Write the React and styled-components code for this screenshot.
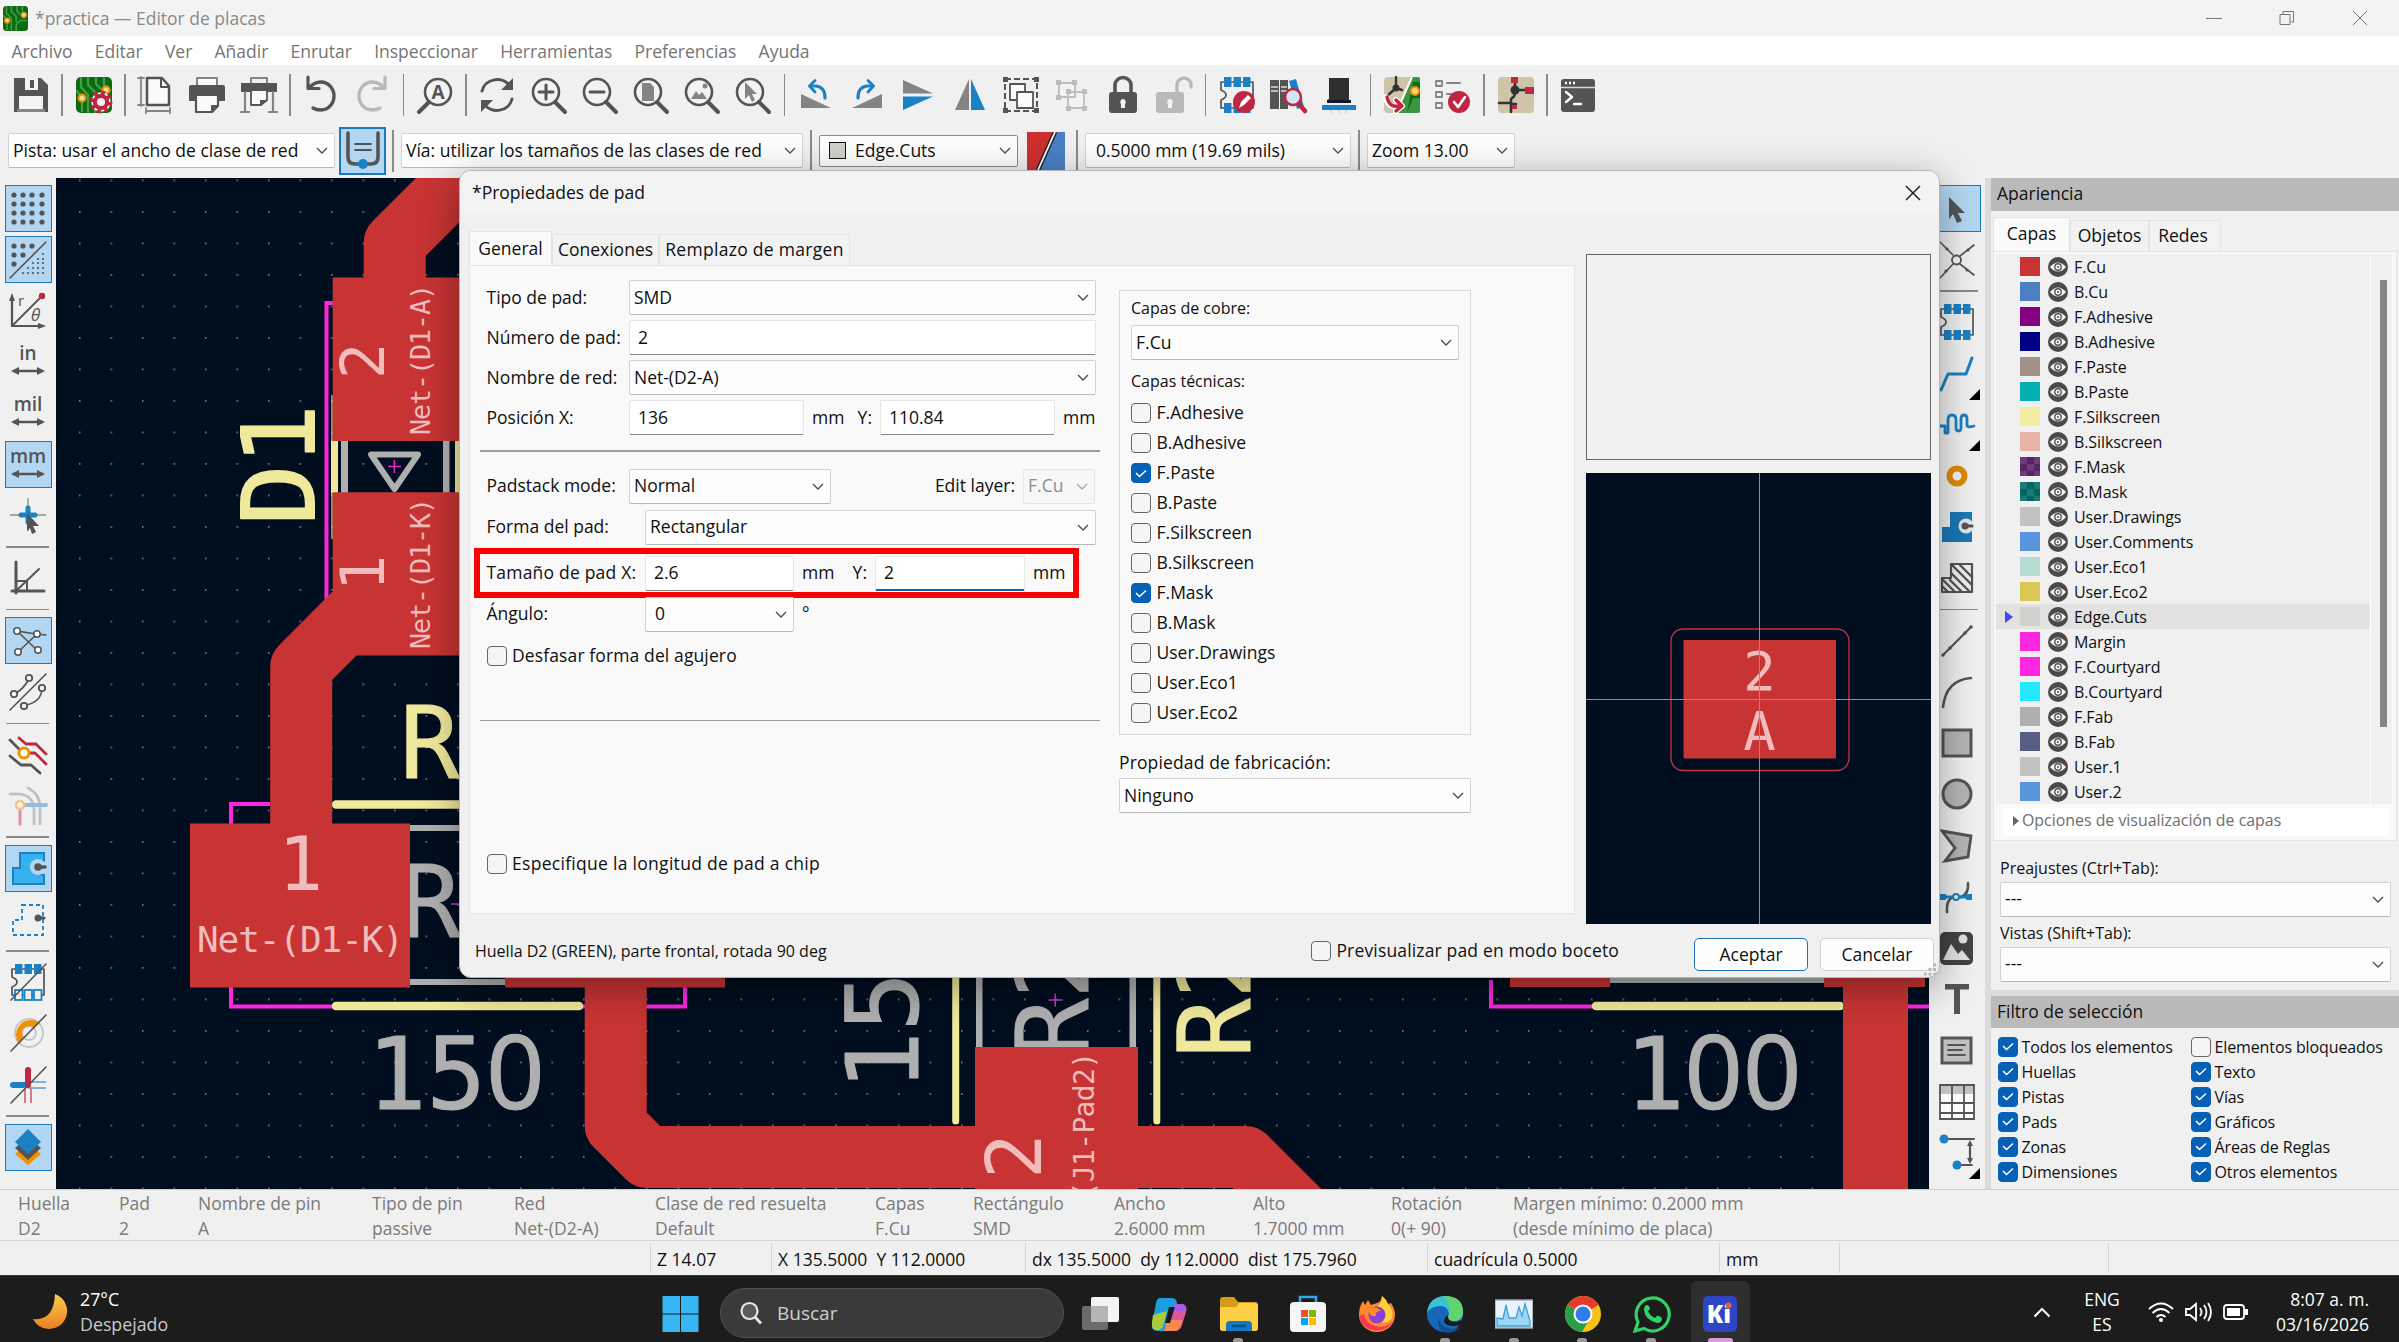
import styled, { createGlobalStyle, css } from "styled-components";

const GlobalStyle = createGlobalStyle`
  * {
    box-sizing: border-box;
  }

  body {
    margin: 0;
    overflow: hidden;
    background: #f0f0f0;
    color: #101010;
    font-family: "Open Sans", "Noto Sans", sans-serif;
    font-size: 17.5px;
    line-height: 1;
  }
`;

const G = "#545454";
const L = "#848484";
const B = "#1a81c4";
const R = "#bf2641";
const O = "#f29100";
const CU = "#c83434";

// --- 아이콘 (36x36) ---

const stroke = (color, width = 2.5) => ({
  fill: "none",
  stroke: color,
  strokeWidth: width,
  strokeLinecap: "round",
  strokeLinejoin: "round",
});

const Lens = ({ children }) => (
  <>
    <circle cx="15" cy="15" r="13" {...stroke(G, 2.6)} fill="#f3f3f3" />
    <path d="M24 25l10 10" {...stroke(G, 4)} />
    {children}
  </>
);

const Board = () => (
  <>
    <rect x="0" y="0" width="36" height="36" rx="5" fill="#0c6b12" />
    <path
      d="M5 1v9l7 8v17M12 1v7l7 7v8M20 1v6l5 5M1 14l5 7v13M28 1v7l6 5M19 35v-8l6-6h9"
      {...stroke("#3fa046", 2.2)}
    />
    <circle cx="30" cy="13" r="3.5" fill="#f2d9a0" stroke={O} strokeWidth="2" />
    <circle cx="6" cy="21" r="3.5" fill="#f2d9a0" stroke={O} strokeWidth="2" />
  </>
);

const Dots = ({ pts, r = 2.6 }) =>
  pts.map(([x, y]) => <circle key={`${x}-${y}`} cx={x} cy={y} r={r} fill={G} />);

const gridPts = [4, 13, 22, 32].flatMap((x) => [4, 13, 22, 31].map((y) => [x, y]));
const finePts = [
  [33, 12], [28, 17], [33, 17], [23, 21], [28, 21], [33, 21], [18, 26], [23, 26],
  [28, 26], [33, 26], [13, 31], [18, 31], [23, 31], [28, 31], [33, 31],
];

const Arrows = ({ label }) => (
  <>
    <text
      x="18"
      y="16"
      textAnchor="middle"
      fontFamily="Open Sans"
      fontWeight="600"
      fontSize="19"
      fill={G}
    >
      {label}
    </text>
    <path d="M4 27h28" {...stroke(G, 2.5)} />
    <path d="M1 27l8-4v8zM35 27l-8-4v8z" fill={G} />
  </>
);

const ChipPads = ({ hollow }) => (
  <>
    <path d="M2 5h32v26H2v-8q5-2 5-5t-5-5z" {...stroke(G, 1.7)} />
    {[5, 14.5, 24].map((x) => (
      <g key={x}>
        <rect x={x} y="0" width="7.5" height="10" fill={B} />
        <rect
          x={x}
          y="26"
          width="7.5"
          height="10"
          fill={hollow ? "#f0f0f0" : B}
          stroke={B}
          strokeWidth={hollow ? 1.8 : 0}
        />
      </g>
    ))}
  </>
);

const Picture = () => <path d="M7 22l5-8 3 4 3-3 5 7z" fill={L} />;

const icons = {
  save: (
    <>
      <path d="M1 1h27l7 7v27H1z" fill={G} />
      <rect x="12" y="1" width="13" height="12" fill="#f3f3f3" />
      <rect x="17" y="3" width="4" height="8" fill={G} />
      <rect x="6" y="19" width="24" height="13" fill="#f3f3f3" />
      <rect x="4" y="32" width="28" height="3" fill={L} />
    </>
  ),
  boardSetup: (
    <>
      <Board />
      <circle cx="25" cy="25" r="9" fill={R} stroke="#fff" strokeWidth="1.5" />
      <circle cx="25" cy="25" r="9.5" fill="none" stroke={R} strokeWidth="4" strokeDasharray="4 3.4" />
      <circle cx="25" cy="25" r="4" fill="#f3f3f3" />
    </>
  ),
  page: (
    <>
      <path d="M9 1h15l7 8v19H9z" {...stroke(G, 2.5)} fill="#fafafa" />
      <path d="M23 1v9h8" {...stroke(G, 2)} />
      <path d="M3 0v29M0 1h6M0 28h6M8 34h24M8 31v5M32 31v5" {...stroke(L, 1.8)} />
    </>
  ),
  print: (
    <>
      <path d="M8 8V1h20v7" {...stroke(L, 2)} fill="#fafafa" />
      <path d="M0 10q0-2 2-2h32q2 0 2 2v14h-7v-6H7v6H0z" fill={G} />
      <path d="M7 18h22v11l-6 6H7z" {...stroke(G, 2.2)} fill="#fafafa" />
      <path d="M22 35v-7h7" fill={G} />
    </>
  ),
  plot: (
    <>
      <path d="M10 6V1h16v5" {...stroke(L, 2)} />
      <path d="M0 6h36v9H0z" fill={G} />
      <path d="M4 15v20M32 15v20M0 35h8M28 35h8" {...stroke(L, 2.2)} />
      <path d="M10 13h16v10l-6 5H10z" {...stroke(G, 1.8)} fill="#fafafa" />
      <path d="M19 29v-6h7z" fill={G} />
    </>
  ),
  undo: (
    <>
      <path d="M6 11Q11 5 18 5a13 14 0 0 1 0 28q-5 0-8-2" {...stroke(G, 3.4)} />
      <path d="M5 0v11.500h11" {...stroke(G, 3.2)} />
    </>
  ),
  redo: (
    <>
      <path d="M30 11Q25 5 18 5a13 14 0 0 0 0 28q5 0 8-2" {...stroke("#b9b9b9", 3.4)} />
      <path d="M31 0v11.500H20" {...stroke("#b9b9b9", 3.2)} />
    </>
  ),
  find: (
    <>
      <circle cx="21" cy="15" r="13" {...stroke(G, 2.6)} fill="#f3f3f3" />
      <path d="M12 25L2 35" {...stroke(G, 4)} />
      <text x="21" y="22" textAnchor="middle" fontFamily="Open Sans" fontWeight="700" fontSize="19" fill={G}>
        A
      </text>
    </>
  ),
  refresh: (
    <>
      <path d="M3 14A15.500 14.500 0 0 1 31 9M33 22A15.500 14.500 0 0 1 5 27" {...stroke(G, 3)} />
      <path d="M34 1v12H22zM2 35V23h12z" fill={G} />
    </>
  ),
  zoomIn: (
    <Lens>
      <path d="M15 8v14M8 15h14" {...stroke(G, 3)} />
    </Lens>
  ),
  zoomOut: (
    <Lens>
      <path d="M8 15h14" {...stroke(G, 3)} />
    </Lens>
  ),
  zoomFit: (
    <Lens>
      <path d="M9 6h8l4 4v14H9z" fill={L} />
    </Lens>
  ),
  zoomObj: (
    <Lens>
      <Picture />
      <circle cx="21" cy="9" r="2.500" fill={L} />
    </Lens>
  ),
  zoomSel: (
    <Lens>
      <path d="M10 5l12 12h-5l3 6-3 2-3-7-4 4z" fill={L} />
    </Lens>
  ),
  rotL: (
    <>
      <path d="M3 17v14h30z" fill={L} />
      <path d="M12 9h6q9 1 9 12" {...stroke(B, 3.2)} />
      <path d="M17 3.500L11.500 9l5.500 6" {...stroke(B, 2.8)} />
    </>
  ),
  rotR: (
    <>
      <path d="M33 17v14H3z" fill={L} />
      <path d="M24 9h-6q-9 1-9 12" {...stroke(B, 3.2)} />
      <path d="M19 3.500L24.500 9 19 15" {...stroke(B, 2.8)} />
    </>
  ),
  flipV: (
    <>
      <path d="M3 3l30 13.500H3z" fill={L} />
      <path d="M3 33l30-13.500H3z" fill={B} />
    </>
  ),
  flipH: (
    <>
      <path d="M17 2v31H3z" fill={L} />
      <path d="M19 2v31h14z" fill={B} />
    </>
  ),
  group: (
    <>
      <rect x="2" y="2" width="32" height="32" fill="none" stroke={G} strokeWidth="2" strokeDasharray="6 3" />
      <path d="M7 7h15v16H7z" {...stroke(G, 1.8)} fill="#fafafa" />
      <path d="M14 15h16v16H14z" {...stroke(G, 1.8)} fill="#fafafa" />
      <path d="M0 0h5v5H0zM31 0h5v5h-5zM0 31h5v5H0zM31 31h5v5h-5z" fill={G} />
    </>
  ),
  ungroup: (
    <>
      <path d="M5 6h16v14H5zM14 15h16v16H14z" {...stroke("#bdbdbd", 1.8)} fill="#f3f3f3" />
      <path
        d="M2 3h5v5H2zM18 3h5v5h-5zM2 18h5v5H2zM12 12h5v5h-5zM28 12h5v5h-5zM12 29h5v5h-5zM28 29h5v5h-5z"
        fill="#bdbdbd"
      />
    </>
  ),
  lock: (
    <>
      <path d="M10 16V8a8 7.500 0 0 1 16 0v8" {...stroke(G, 3.6)} />
      <rect x="4" y="15" width="28" height="21" rx="3" fill={G} />
      <path d="M18 22a3 3 0 0 1 2 5v4h-4v-4a3 3 0 0 1 2-5" fill="#f3f3f3" />
    </>
  ),
  unlock: (
    <>
      <path d="M21 16V8a7 7 0 0 1 14 0v2" {...stroke("#b9b9b9", 3.4)} />
      <rect x="0" y="15" width="28" height="21" rx="3" fill="#b9b9b9" />
      <path d="M14 22a3 3 0 0 1 2 5v4h-4v-4a3 3 0 0 1 2-5" fill="#f3f3f3" />
    </>
  ),
  fpEdit: (
    <>
      <ChipPads />
      <circle cx="25" cy="25" r="11" fill={R} />
      <path d="M20 31l2-6 7-7 3 3-7 7z" fill="#fff" />
    </>
  ),
  library: (
    <>
      <rect x="0" y="3" width="9" height="29" fill={G} />
      <rect x="10" y="3" width="8" height="29" fill={G} />
      <path d="M1 10h7M1 14h7M11 10h6M11 14h6" stroke="#ddd" strokeWidth="1.500" />
      <path d="M19 4l7-2 8 28-7 2z" fill={B} />
      <circle cx="23" cy="20" r="8" fill="#cfe6f7" stroke={R} strokeWidth="2.500" />
      <path d="M29 27l6 7" {...stroke(R, 4.5)} />
    </>
  ),
  chip3d: (
    <>
      <path d="M8 1h20v25H6V23l2-1z" fill="#2f2f2f" />
      <rect x="6" y="23" width="24" height="3" fill="#11182a" />
      <rect x="1" y="28" width="34" height="5" fill={B} />
      <path d="M10 33v3M18 33v3M25 33v3" stroke="#9fc8e6" />
    </>
  ),
  updatePcb: (
    <>
      <rect width="36" height="36" rx="4" fill="#cfc4a8" />
      <path d="M36 2v32q0 2-2 2H14L27 0h7q2 0 2 2" fill="#3e9445" />
      <path d="M29 5h7v16h-7l-6 15" fill="#0f6b14" />
      <path d="M12 0v11l6 2M12 11l-9 8" {...stroke("#333", 2.4)} />
      <circle cx="12" cy="11" r="3.500" fill="#333" />
      <circle cx="31" cy="14" r="4" fill="#f5d18c" stroke={O} strokeWidth="2" />
      <path d="M28 0L12 36" stroke="#fff" strokeWidth="2" />
      <path d="M2 20q2 12 14 9M12 23l6 6-6 5" {...stroke("#fff", 6)} />
      <path d="M3 20q2 11 13 9M12 23l6 6-6 5" {...stroke(R, 3.4)} />
    </>
  ),
  drc: (
    <>
      <path d="M1 4h6v5H1zM1 15h6v5H1zM1 26h6v5H1z" {...stroke(L, 1.8)} />
      <path d="M12 6h13M12 17h6" {...stroke(L, 2)} />
      <circle cx="24" cy="25" r="11" fill={R} />
      <path d="M19 25l4 5 7-10" {...stroke("#fff", 2.6)} />
    </>
  ),
  schematic: (
    <>
      <rect width="36" height="36" rx="4" fill="#cfc4a8" />
      <path d="M17 6v7h12M17 13q1 6-4 9v13M13 26H1M13 27h5" {...stroke("#333", 2.6)} />
      <circle cx="17" cy="13" r="4.500" fill="#333" />
      <path d="M13 0h7v6h-7zM27 10h9v7h-9zM14 28h5v4h-5z" fill={R} />
    </>
  ),
  terminal: (
    <>
      <rect x="1" y="2" width="34" height="33" rx="3" fill={G} />
      <path d="M1 10.500h34" stroke="#d8d8d8" strokeWidth="1.600" />
      <path d="M5 6h2M9 6h2M13 6h2" stroke="#fff" strokeWidth="2.600" />
      <path d="M6 15l6 5-6 5M14 27h7" {...stroke("#fff", 2.4)} />
    </>
  ),
  trackAuto: (
    <>
      <path d="M3 0v24q0 7 7 7h16q7 0 7-7V0" {...stroke(G, 3.6)} />
      <path d="M10 11h16M10 17h16" {...stroke(G, 1.8)} />
      <circle cx="18" cy="31" r="5" fill={B} />
    </>
  ),
  grid: <Dots pts={gridPts} />,
  gridOverride: (
    <>
      <Dots pts={[[4, 4], [13, 4], [22, 4], [4, 13], [13, 13], [4, 22]]} />
      <Dots pts={finePts} r={1.1} />
      <path d="M0 36L36 0" {...stroke(G, 1.6)} />
    </>
  ),
  polar: (
    <>
      <path d="M2 4v29h28" {...stroke(G, 2.2)} />
      <path d="M2 0l3 8h-6zM36 33l-8-3v6z" fill={G} />
      <path d="M2 33L31 4" {...stroke(G, 1.8)} />
      <circle cx="32" cy="3" r="3.200" fill={R} />
      <text x="8" y="13" fontSize="15" fill={G} fontFamily="Open Sans">r</text>
      <text x="21" y="28" fontSize="17" fontStyle="italic" fill={G} fontFamily="Open Sans">θ</text>
    </>
  ),
  inch: <Arrows label="in" />,
  mil: <Arrows label="mil" />,
  mm: <Arrows label="mm" />,
  cursor: (
    <>
      <path d="M18 0v33M0 17h36" stroke="#a5a5a5" strokeWidth="1.800" />
      <path d="M18 10v14M11 17h14" {...stroke(B, 5)} />
      <path d="M17 15l12 13h-6l3 6-4 2-2-6-3 3z" fill={G} />
    </>
  ),
  angle: (
    <>
      <path d="M6 2v31M2 31h32" {...stroke(G, 3)} />
      <path d="M6 31L29 9M6 21h11v10" {...stroke(G, 2)} />
    </>
  ),
  rats: (
    <>
      <path d="M7 8l21 20M8 29L27 11M7 8q18 3 29 4" {...stroke(G, 1.6)} />
      {[[7, 8], [27, 11], [8, 29], [28, 27]].map(([x, y]) => (
        <circle key={`${x}${y}`} cx={x} cy={y} r="3.200" fill="#fff" stroke={G} strokeWidth="1.500" />
      ))}
    </>
  ),
  ratsCurved: (
    <>
      <path d="M0 36L36 0M4 20q9-4 15-15M32 15q-1 13-16 16" {...stroke(G, 1.6)} />
      {[[4, 20], [19, 4], [32, 14], [14, 32]].map(([x, y]) => (
        <circle key={`${x}${y}`} cx={x} cy={y} r="3.200" fill="#f5f5f5" stroke={G} strokeWidth="1.800" />
      ))}
    </>
  ),
  netColor: (
    <>
      <path d="M0 3l14 14M0 19l11 9h10l9 8" {...stroke(G, 2.8)} />
      <path d="M9 1l7 6h10l10 10M15 16h10l11 11" {...stroke(R, 2.8)} />
      <circle cx="14" cy="16" r="5" fill="#fff" stroke={O} strokeWidth="3" />
    </>
  ),
  netDim: (
    <g opacity="0.450">
      <path d="M0 6h10q14 2 14 16v14M18 0q12 6 12 20v16" {...stroke(L, 2.6)} />
      <path d="M14 17h22" {...stroke(B, 4)} />
      <path d="M10 22v14" {...stroke(R, 3)} />
      <circle cx="10" cy="17" r="4" fill="#fff" stroke={O} strokeWidth="2.600" />
    </g>
  ),
  zoneFill: (
    <>
      <path d="M10 3h24v8a7 7 0 0 0 0 14v9H3V18h7z" fill="#37b2ef" stroke={B} strokeWidth="2" />
      <circle cx="28" cy="17" r="8" fill="#b3d7f2" />
      <circle cx="28" cy="17" r="3.800" fill={G} />
      <path d="M28 17h7" {...stroke(G, 3.6)} />
    </>
  ),
  zoneOutline: (
    <>
      <path d="M12 3h21v30H3V18h9z" fill="none" stroke={B} strokeWidth="1.800" strokeDasharray="4 3" />
      <circle cx="28" cy="16" r="3.500" fill={G} />
      <path d="M28 16h6" {...stroke(G, 3.2)} />
    </>
  ),
  padSketch: (
    <>
      <ChipPads hollow />
      <path d="M1 36L36 0" {...stroke(G, 1.6)} />
    </>
  ),
  viaSketch: (
    <>
      <circle cx="19" cy="18" r="14" {...stroke("#c4c4c4", 1.8)} />
      <circle cx="19" cy="18" r="7" {...stroke("#c4c4c4", 1.8)} />
      <path d="M9 29A15 15 0 0 1 30 8l-6 5a7 7 0 0 0-10 10z" fill={O} />
      <path d="M1 36L36 0" {...stroke(G, 1.6)} />
    </>
  ),
  trackSketch: (
    <>
      <path d="M3 18h14" {...stroke(B, 6)} />
      <path d="M18 15h18M18 21h18" stroke="#7fb0d6" strokeWidth="2.200" />
      <path d="M18 3v15" {...stroke(R, 6)} />
      <path d="M15 20v16M21 20v16" stroke="#d6798a" strokeWidth="2" />
      <path d="M1 36L36 0" {...stroke(G, 1.6)} />
    </>
  ),
  layers: (
    <>
      <path d="M18 14l13 11-13 11L5 25z" fill={O} />
      <path d="M18 8l13 11-13 12L5 19z" fill={G} />
      <path d="M18 0l13 13-13 12L5 13z" fill={B} />
    </>
  ),
  select: <path d="M10 6l16 16h-7l4 8-5 2-4-9-4 5z" fill={G} />,
  localRats: (
    <>
      <path d="M1 0l13 13M35 3L21 14M1 36l13-14M35 33L21 22" {...stroke(G, 1.6)} />
      <circle cx="17.500" cy="18" r="4.500" {...stroke(G, 1.8)} />
      <Dots pts={[[29, 8], [8, 7], [7, 29], [28, 28]]} r={1.6} />
    </>
  ),
  footprint: <ChipPads />,
  route: <path d="M2 34l7-16h18l6-16" {...stroke(B, 3)} />,
  tune: (
    <path d="M0 19h6v7h3V13q0-5 4-5t4 5v8q0 3 2.500 3t2.500-3v-9q0-4 3-4t3 4v6q0 3 7 1" {...stroke(B, 2.8)} />
  ),
  via: <circle cx="18" cy="18" r="7.500" fill="#f3f3f3" stroke="#df8a08" strokeWidth="6" />,
  zone: (
    <>
      <path d="M11 3h22v30H3V18h8z" fill="#1a78b8" />
      <circle cx="27" cy="17" r="7.500" fill="#e6e6e6" />
      <circle cx="26" cy="17" r="3.500" fill={G} />
      <path d="M26 17h7" {...stroke(G, 3.2)} />
    </>
  ),
  ruleArea: (
    <>
      <path d="M12 4h21v28H3V18h9z" {...stroke(G, 2.2)} />
      <path d="M13 5l20 20M21 5l12 12M12 13l19 19M4 20l12 12M11 20l12 12M4 27l5 5" {...stroke(G, 2.4)} />
    </>
  ),
  line: (
    <>
      <path d="M4 32L32 4" {...stroke(G, 2.2)} />
      <Dots pts={[[4, 32], [11, 25], [32, 4], [26, 10]]} r={1.8} />
    </>
  ),
  arc: <path d="M4 33Q7 6 32 4" {...stroke(G, 2.6)} />,
  rect: <rect x="4" y="5" width="28" height="26" fill="#b5b5b5" stroke={G} strokeWidth="3" />,
  circle: <circle cx="18" cy="18" r="14" fill="#b5b5b5" stroke={G} strokeWidth="3" />,
  polygon: <path d="M3 3l29 5-3 21-23 4 10-13z" fill="#b5b5b5" stroke={G} strokeWidth="2.800" />,
  bezier: (
    <>
      <path d="M8 33q-1-12 6-15h8q8-3 7-14" {...stroke(G, 2.6)} />
      <path d="M3 18h28" stroke={B} strokeWidth="3" />
      <path d="M1 15h6v6H1zM27 15h6v6h-6z" fill={B} />
      <circle cx="17" cy="18" r="3" fill="#e8e8e8" stroke={B} strokeWidth="1.800" />
    </>
  ),
  image: (
    <>
      <rect x="1" y="2" width="33" height="33" rx="5" fill="#444" />
      <circle cx="24" cy="9" r="4.500" fill="#e2e2e2" />
      <path d="M4 30l8-16 7 10 4-4 8 10z" fill="#e2e2e2" />
    </>
  ),
  text: <path d="M6 3h24v5.500h-9V33h-6V8.500H6z" fill={G} />,
  textbox: (
    <>
      <rect x="3" y="6" width="29" height="25" fill="#bfbfbf" stroke={G} strokeWidth="3" />
      <path d="M9 13h17M9 18h14M9 23h17" {...stroke(G, 1.8)} />
    </>
  ),
  table: (
    <>
      <rect x="1" y="1" width="34" height="34" fill="#fbfbfb" />
      <path d="M1 1h34v9H1z" fill="#c2c2c2" />
      <path d="M1 1h34v34H1zM1 19h34M1 29h34M13 1v34M25 1v34" stroke={G} strokeWidth="1.800" fill="none" />
    </>
  ),
  dimension: (
    <>
      <path d="M5 4h30M18 30h15" {...stroke(G, 1.8)} />
      <path d="M31 8v18" {...stroke(G, 2.2)} />
      <path d="M31 5l3 6h-6zM31 29l3-6h-6z" fill={G} />
      <circle cx="5" cy="4" r="4.500" fill={B} />
      <circle cx="18" cy="30" r="4.500" fill={B} />
    </>
  ),
};

const Icon = ({ name, size = 36 }) => (
  <svg width={size} height={size} viewBox="0 0 36 36" overflow="visible">
    {icons[name]}
  </svg>
);

const Chevron = () => (
  <ChevronSvg viewBox="0 0 12 7">
    <path d="M1 1l5 5 5-5" fill="none" stroke="currentColor" strokeWidth="1.300" />
  </ChevronSvg>
);

// --- 데이터 ---

const menu = [
  "Archivo", "Editar", "Ver", "Añadir", "Enrutar", "Inspeccionar",
  "Herramientas", "Preferencias", "Ayuda",
];

const mainTools = [
  "save", "|", "boardSetup", "|", "page", "print", "plot", "|", "undo", "redo", "|",
  "find", "|", "refresh", "zoomIn", "zoomOut", "zoomFit", "zoomObj", "zoomSel", "|",
  "rotL", "rotR", "flipV", "flipH", "group", "ungroup", "lock", "unlock", "|",
  "fpEdit", "library", "chip3d", "|", "updatePcb", "drc", "|", "schematic", "|", "terminal",
];

const leftTools = [
  "grid*", "gridOverride*", "polar", "inch", "mil", "mm*", "cursor", "|", "angle", "|",
  "rats*", "ratsCurved", "|", "netColor", "netDim", "|", "zoneFill*", "zoneOutline", "|",
  "padSketch", "viaSketch", "trackSketch", "|", "layers*",
];

const rightTools = [
  "select*", "localRats", "|", "footprint", "route+", "tune+", "via", "zone", "ruleArea", "|",
  "line", "arc", "rect", "circle", "polygon", "bezier", "image", "text", "textbox",
  "table", "dimension+",
];

const layers = [
  ["F.Cu", "#c83434"], ["B.Cu", "#4d7fc4"], ["F.Adhesive", "#840084"],
  ["B.Adhesive", "#000084"], ["F.Paste", "#a39088"], ["B.Paste", "#00b0b0"],
  ["F.Silkscreen", "#f2eda1"], ["B.Silkscreen", "#e8b2a7"],
  ["F.Mask", "#552463", "#6c3c7c"], ["B.Mask", "#02665e", "#177d74"],
  ["User.Drawings", "#c2c2c2"], ["User.Comments", "#5994dc"], ["User.Eco1", "#b4dbd2"],
  ["User.Eco2", "#d8c852"], ["Edge.Cuts", "#d0d2cd"], ["Margin", "#ff26e2"],
  ["F.Courtyard", "#ff26e2"], ["B.Courtyard", "#26e9ff"], ["F.Fab", "#afafaf"],
  ["B.Fab", "#585d84"], ["User.1", "#c2c2c2"], ["User.2", "#5994dc"],
];

const filters = [
  ["Todos los elementos", true], ["Elementos bloqueados", false],
  ["Huellas", true], ["Texto", true],
  ["Pistas", true], ["Vías", true],
  ["Pads", true], ["Gráficos", true],
  ["Zonas", true], ["Áreas de Reglas", true],
  ["Dimensiones", true], ["Otros elementos", true],
];

const techLayers = [
  ["F.Adhesive", false], ["B.Adhesive", false], ["F.Paste", true], ["B.Paste", false],
  ["F.Silkscreen", false], ["B.Silkscreen", false], ["F.Mask", true], ["B.Mask", false],
  ["User.Drawings", false], ["User.Eco1", false], ["User.Eco2", false],
];

const info = [
  ["Huella", "D2", 101], ["Pad", "2", 79], ["Nombre de pin", "A", 174],
  ["Tipo de pin", "passive", 142], ["Red", "Net-(D2-A)", 141],
  ["Clase de red resuelta", "Default", 220], ["Capas", "F.Cu", 98],
  ["Rectángulo", "SMD", 141], ["Ancho", "2.6000 mm", 139], ["Alto", "1.7000 mm", 138],
  ["Rotación", "0(+ 90)", 122], ["Margen mínimo: 0.2000 mm", "(desde mínimo de placa)", 400],
];

const status = [
  ["", 650], ["Z 14.07", 121], ["X 135.5000  Y 112.0000", 254],
  ["dx 135.5000  dy 112.0000  dist 175.7960", 402], ["cuadrícula 0.5000", 292],
  ["mm", 120], ["", 269], ["", 291],
];

// --- 공통 부품 ---

const Tools = ({ items, vertical }) =>
  items.map((item, i) => {
    if (item === "|") return <Separator key={i} $vertical={vertical} />;
    const name = item.replace(/[*+]/, "");
    return (
      <ToolSlot key={i} $vertical={vertical}>
        <ToolButton $active={item.endsWith("*")}>
          <Icon name={name} />
          {item.endsWith("+") && <MoreCorner />}
        </ToolButton>
      </ToolSlot>
    );
  });

const Combo = ({ children, ...props }) => (
  <ComboBox {...props}>
    <span>{children}</span>
    <Chevron />
  </ComboBox>
);

const Check = ({ on, children, small, tracking = 0 }) => (
  <CheckLabel $small={small} $tracking={tracking}>
    <CheckMark $on={on}>
      {on && (
        <svg width="12" height="9" viewBox="0 0 12 9">
          <path d="M1 4l3.500 3.500L11 1.500" fill="none" stroke="#fff" strokeWidth="1.500" />
        </svg>
      )}
    </CheckMark>
    {children}
  </CheckLabel>
);

// --- 보드 캔버스 ---

const StrokeText = ({ x, y, size, len, vertical, color, weight = 0, children }) => (
  <text
    x={vertical ? undefined : x}
    y={vertical ? undefined : y}
    transform={vertical ? `translate(${x} ${y}) rotate(-90)` : undefined}
    fontFamily="DejaVu Sans Mono"
    fontSize={size}
    textLength={len}
    fill={color}
    stroke={weight ? color : "none"}
    strokeWidth={weight}
    strokeLinejoin="round"
  >
    {children}
  </text>
);

const Zero = () => <tspan fontFamily="Noto Sans" fontSize="102">0</tspan>;

const SILK = "#f0e99c";
const FAB = "#afafaf";
const NET = "#f0bcbc";

const BoardCanvas = () => (
  <svg width="1873" height="1011" viewBox="56 178 1873 1011">
    <defs>
      <pattern id="grid" x="79" y="211" width="31.500" height="31.500" patternUnits="userSpaceOnUse">
        <rect width="1.500" height="1.800" fill="#727b86" />
      </pattern>
    </defs>
    <rect x="56" y="178" width="1873" height="1011" fill="#000e1f" />
    <rect x="56" y="178" width="1873" height="1011" fill="url(#grid)" />

    <g fill="none" stroke="#ff26e2" strokeWidth="4">
      <path d="M333 303H326.500V604" />
      <path d="M270 804H231V1006.500H685V980" />
      <path d="M1491 980V1006.500H1929" />
    </g>

    <g fill="none" stroke={SILK} strokeWidth="8.500" strokeLinecap="round">
      <path d="M336 804.500H480M336 1006H579M1596 1006H1840" />
      <path d="M955.700 960V1121M1156.800 960V1121" strokeWidth="7" />
    </g>
    <path d="M331 395h4v144h-4z" fill={SILK} opacity="0.600" />
    <path d="M331 441h7v52h-7zM455 441h7v52h-7z" fill={SILK} />
    <g fill={FAB}>
      <path d="M341 441h7v52h-7zM443 441h6.500v52h-6.500z" />
      <path d="M400 825h70v6h-70zM400 979h110v6h-110zM1600 975h230v8h-230z" />
      <path d="M976 970h6.500v80h-6.500zM1129.500 970h6.500v80h-6.500z" />
    </g>
    <path d="M371 454.500H418L394.500 489z" fill="none" stroke={FAB} strokeWidth="6" strokeLinejoin="round" />

    <StrokeText x={401} y={937} size={99} color={FAB} weight={1}>R</StrokeText>
    <StrokeText x={1088} y={1058} size={99} color={FAB} weight={1} vertical>R2</StrokeText>

    <g fill="none" stroke={CU} strokeWidth="62" strokeLinejoin="round">
      <path d="M394.700 300V243L500 138" />
      <path d="M400 568L301.200 667V840" />
      <path d="M615.700 960V1125.400L647.400 1157H1245.500L1330 1241.500" />
      <path d="M1875.500 960V1200" strokeWidth="65" />
    </g>
    <g fill={CU}>
      <path d="M332.700 277.600H470V441H332.700zM332.700 492.300H470V655.600H332.700z" />
      <path d="M190 823.500H410V987.500H190zM505 900H725V987.500H505z" />
      <path d="M975 1047H1138V1200H975zM1510 900H1610V987H1510zM1824 900H1925V987H1824z" />
    </g>

    <StrokeText x={384} y={379} size={60} color={NET} vertical>2</StrokeText>
    <StrokeText x={430} y={435} size={26.7} len={151} color={NET} vertical>Net-(D1-A)</StrokeText>
    <StrokeText x={384} y={591} size={60} color={NET} vertical>1</StrokeText>
    <StrokeText x={430} y={649} size={26.7} len={151} color={NET} vertical>Net-(D1-K)</StrokeText>
    <StrokeText x={278} y={890} size={75} color={NET}>1</StrokeText>
    <StrokeText x={197} y={952} size={36} len={207} color={NET}>Net-(D1-K)</StrokeText>
    <StrokeText x={1041} y={1179} size={76} color={NET} vertical>2</StrokeText>
    <StrokeText x={1094} y={1263} size={28} len={211} color={NET} vertical>Net-(J1-Pad2)</StrokeText>

    <StrokeText x={313.500} y={525} size={100} color={SILK} weight={2} vertical>D1</StrokeText>
    <StrokeText x={400} y={778} size={99} color={SILK} weight={1}>R</StrokeText>
    <StrokeText x={1250} y={1058} size={99} color={SILK} weight={1} vertical>R2</StrokeText>
    <StrokeText x={367} y={1109} size={99} color={FAB} weight={1}>15<Zero /></StrokeText>
    <StrokeText x={917.500} y={1091} size={99} color={FAB} weight={1} vertical>15<Zero /></StrokeText>
    <StrokeText x={1625} y={1109} size={99} color={FAB} weight={1}>1<Zero /><Zero /></StrokeText>

    <path
      d="M394.300 460v13M388 466.500h13M451 904h14M1055.300 993.500v13M1048.500 1000h14"
      stroke="#e02ccc"
      strokeWidth="1.500"
    />
  </svg>
);

const PadPreview = () => (
  <svg width="345" height="451" viewBox="1586 473 345 451">
    <rect x="1586" y="473" width="345" height="451" fill="#000e1f" />
    <rect x="1671" y="629" width="178" height="141.500" rx="12" fill="none" stroke="#c03444" strokeWidth="1.300" />
    <rect x="1683.500" y="640" width="152.500" height="118.500" fill={CU} />
    <text x="1759.500" y="689.500" textAnchor="middle" fontFamily="DejaVu Sans Mono" fontSize="54" fill={NET}>2</text>
    <text x="1759.500" y="750" textAnchor="middle" fontFamily="DejaVu Sans Mono" fontSize="54" fill={NET}>A</text>
    <path d="M1759.500 473V924M1586 699.500H1931" stroke="#8b9096" />
  </svg>
);

// --- 속성 대화상자 ---

const PadDialog = () => (
  <Dialog>
    <DialogTitle>
      *Propiedades de pad
      <svg width="16" height="16" viewBox="0 0 16 16">
        <path d="M1 1l14 14M15 1L1 15" stroke="#222" strokeWidth="1.500" />
      </svg>
    </DialogTitle>
    <DialogBody>
      <div>
        <DialogTabs>
          <Tab $active $w={83}>General</Tab>
          <Tab $w={107}>Conexiones</Tab>
          <Tab $w={191} $tracking={0.3}>Remplazo de margen</Tab>
        </DialogTabs>
        <DialogPanel>
          <FormColumn>
            <FormRow>
              <FormLabel>Tipo de pad:</FormLabel>
              <Combo $w={467}>SMD</Combo>
            </FormRow>
            <FormRow $top={5}>
              <FormLabel $tracking={0.1}>Número de pad:</FormLabel>
              <Field $w={467}>2</Field>
            </FormRow>
            <FormRow $top={5}>
              <FormLabel $tracking={0.1}>Nombre de red:</FormLabel>
              <Combo $w={467}>Net-(D2-A)</Combo>
            </FormRow>
            <FormRow $top={5}>
              <FormLabel>Posición X:</FormLabel>
              <Field $w={175}>136</Field>
              <Unit $w={76}><span>mm</span><span>Y:</span></Unit>
              <Field $w={175}>110.84</Field>
              <Unit $w={50}>mm</Unit>
            </FormRow>
            <Rule $top={15} />
            <FormRow $top={17}>
              <FormLabel>Padstack mode:</FormLabel>
              <Combo $w={202}>Normal</Combo>
              <EditLayer>Edit layer:</EditLayer>
              <Combo $w={72} $disabled>F.Cu</Combo>
            </FormRow>
            <FormRow $top={6}>
              <FormLabel $wide>Forma del pad:</FormLabel>
              <Combo $w={451}>Rectangular</Combo>
            </FormRow>
            <FormRow $top={11}>
              <FormLabel $wide $tracking={0.2}>Tamaño de pad X:</FormLabel>
              <Field $w={149}>2.6</Field>
              <Unit $w={81}><span>mm</span><span>Y:</span></Unit>
              <Field $w={150} $focus>2</Field>
              <Unit $w={50}>mm</Unit>
              <Highlight />
            </FormRow>
            <FormRow $top={6}>
              <FormLabel $wide>Ángulo:</FormLabel>
              <Combo $w={149} $pad={9}>0</Combo>
              <Degree>°</Degree>
            </FormRow>
            <FormRow $top={7}>
              <Check tracking={0.12}>Desfasar forma del agujero</Check>
            </FormRow>
            <Rule $top={46} />
            <FormRow $top={125}>
              <Check tracking={0.29}>Especifique la longitud de pad a chip</Check>
            </FormRow>
          </FormColumn>
          <LayerColumn>
            <LayerBox>
              <Caption>Capas de cobre:</Caption>
              <Combo $w={328}>F.Cu</Combo>
              <Caption $top={13}>Capas técnicas:</Caption>
              {techLayers.map(([name, on]) => (
                <TechRow key={name}>
                  <Check on={on}>{name}</Check>
                </TechRow>
              ))}
            </LayerBox>
            <FabLabel>Propiedad de fabricación:</FabLabel>
            <Combo $w={352}>Ninguno</Combo>
          </LayerColumn>
        </DialogPanel>
      </div>
      <PreviewColumn>
        <PreviewInfo />
        <PadPreview />
      </PreviewColumn>
    </DialogBody>
    <DialogFooter>
      <FootNote>Huella D2 (GREEN), parte frontal, rotada 90 deg</FootNote>
      <FooterRight>
        <Check tracking={0.16}>Previsualizar pad en modo boceto</Check>
        <ButtonRow>
          <PushButton $primary>Aceptar</PushButton>
          <PushButton>Cancelar</PushButton>
        </ButtonRow>
      </FooterRight>
    </DialogFooter>
    <Grip viewBox="0 0 14 14">
      <path d="M1 12h3M6 12h3M11 12h3M11 7h3M11 2h3M6 7h3" stroke="#b5b5b5" strokeWidth="3" />
    </Grip>
  </Dialog>
);

// --- 오른쪽 패널 ---

const Eye = () => (
  <svg width="20" height="20" viewBox="0 0 20 20">
    <circle cx="10" cy="10" r="10" fill="#4a4a4a" />
    <path d="M2 10q8-9 16 0q-8 9-16 0" fill="#f5f5f5" />
    <circle cx="10" cy="10" r="3.200" fill="#fff" stroke="#555" strokeWidth="1.400" />
    <circle cx="10" cy="10" r="1.200" fill="#777" />
  </svg>
);

const SidePanel = () => (
  <Side>
    <PanelHeader>Apariencia</PanelHeader>
    <SideTabs>
      <Tab $active $w={77}>Capas</Tab>
      <Tab $w={79}>Objetos</Tab>
      <Tab $w={72} $shift={-4}>Redes</Tab>
    </SideTabs>
    <LayerPanel>
      <LayerScroll>
        <LayerList>
          {layers.map(([name, color, alt]) => (
            <LayerRow key={name} $active={name === "Edge.Cuts"}>
              <Marker>{name === "Edge.Cuts" && <ActiveArrow />}</Marker>
              <Swatch $color={color} $alt={alt} />
              <Eye />
              <span>{name}</span>
            </LayerRow>
          ))}
        </LayerList>
        <ScrollTrack>
          <ScrollThumb />
        </ScrollTrack>
      </LayerScroll>
      <LayerOptions>
        <OptionArrow />
        Opciones de visualización de capas
      </LayerOptions>
    </LayerPanel>
    <Presets>
      <PresetLabel>Preajustes (Ctrl+Tab):</PresetLabel>
      <Combo $w={391}>---</Combo>
      <PresetLabel>Vistas (Shift+Tab):</PresetLabel>
      <Combo $w={391}>---</Combo>
    </Presets>
    <SideSash />
    <PanelHeader>Filtro de selección</PanelHeader>
    <FilterGrid>
      {filters.map(([name, on]) => (
        <Check key={name} on={on} small tracking={-0.12}>{name}</Check>
      ))}
    </FilterGrid>
  </Side>
);

// --- 작업 표시줄 ---

const apps = [
  {
    name: "tasks",
    art: (
      <>
        <rect x="0" y="11" width="26" height="24" rx="2" fill="#6b6b6b" />
        <rect x="9" y="2" width="28" height="25" rx="2" fill="#f4f4f4" />
        <rect x="9" y="11" width="17" height="16" fill="#b5b5b5" />
      </>
    ),
  },
  {
    name: "copilot",
    art: (
      <>
        <path d="M9 3h12q4 0 5 5l-6 22q-2 6-7 6H6q-6 0-5-7L5 8q1-5 4-5" fill="#1b9de0" />
        <path d="M2 20l14-4-4 15q-2 5-7 4-5-1-4-8z" fill="#a8cc3a" />
        <path d="M30 9q7 0 5 8l-4 13q-2 6-7 6H12q4-2 6-8l5-19z" fill="#e0589b" />
        <path d="M14 25h17l-1 5q-2 6-7 6H12q4-2 2-11" fill="#f58a4e" />
        <path d="M24 9h6q6 0 5 7l-16 0z" fill="#a55ee8" />
        <path d="M18 12h6l-5 16h-5z" fill="#1c1c1c" />
      </>
    ),
  },
  {
    name: "files",
    run: true,
    art: (
      <>
        <path d="M0 5q0-3 3-3h11l4 5h17q3 0 3 3v23q0 3-3 3H3q-3 0-3-3z" fill="#d69a16" />
        <path d="M0 12l16 0 3-4h16q3 0 3 3v22q0 3-3 3H3q-3 0-3-3z" fill="#fccf45" />
        <path d="M6 36v-6q0-4 4-4h18q4 0 4 4v6z" fill="#1478c6" />
        <path d="M12 31h14" stroke="#0c4f8d" strokeWidth="2.500" />
      </>
    ),
  },
  {
    name: "store",
    art: (
      <>
        <path d="M11 9V2h16v7" fill="none" stroke="#35a6e8" strokeWidth="2.500" />
        <rect x="1" y="7" width="36" height="30" rx="4" fill="#f5f5f5" />
        <path d="M12 15h7v7h-7z" fill="#f25022" />
        <path d="M20 15h7v7h-7z" fill="#7fba00" />
        <path d="M12 23h7v7h-7z" fill="#00a4ef" />
        <path d="M20 23h7v7h-7z" fill="#ffb900" />
      </>
    ),
  },
  {
    name: "firefox",
    art: (
      <>
        <path d="M19 8q4-1 5-7 4 3 6 8l3-1q4 6 4 12a18 17 0 0 1-36 0q0-8 4-14l2 4 3-5 3 5z" fill="#fd8a2a" />
        <path d="M24 1q4 3 6 8 6 6 4 14-4 6-10 4l-4-16q4-4 4-10" fill="#ffd23c" />
        <path d="M1 21a18 17 0 0 0 34 5q-8 8-18 5T6 19z" fill="#fb3558" />
        <circle cx="19" cy="20" r="8.500" fill="#8a3fd6" />
        <path d="M10 14q8-4 13 2-6 0-5 5-6 2-8-7" fill="#fd8a2a" />
      </>
    ),
  },
  {
    name: "edge",
    run: true,
    art: (
      <>
        <circle cx="19" cy="19" r="18" fill="#1767ba" />
        <path d="M1 18Q3 1 20 1q17 1 17 16 0 9-11 9-7-1-3-7-1-8-9-8-9 0-13 7" fill="#3bc3d2" />
        <path d="M18 1q19 0 19 16 0 9-10 9-7-1-4-6 3-9-5-19" fill="#62d36f" />
        <path d="M13 22q0 10 12 12 7 0 9-3-3 7-13 7-11-2-8-16" fill="#0f4c94" />
        <path d="M22 20q-1 7 8 7l6-2-2 5q-12 3-16-3 0-5 4-7" fill="#1c1c1c" />
      </>
    ),
  },
  {
    name: "monitor",
    run: true,
    art: (
      <>
        <rect x="0" y="5" width="38" height="28" fill="#e8f3fa" stroke="#9aa7b0" strokeWidth="1.500" />
        <path d="M2 31V23l6 1 3-14 3 13h7l3-11 3 9 3-12 5 17v5z" fill="#9ed5f3" stroke="#3f9fd8" strokeWidth="1.300" />
      </>
    ),
  },
  {
    name: "chrome",
    run: true,
    art: (
      <>
        <circle cx="19" cy="19" r="18" fill="#fbc116" />
        <path d="M19 19L3.500 10A18 18 0 0 1 34.600 10z" fill="#e33b2e" />
        <path d="M19 19L3.500 10A18 18 0 0 0 18 37l8-14z" fill="#269f48" />
        <circle cx="19" cy="19" r="9.500" fill="#fff" />
        <circle cx="19" cy="19" r="7.500" fill="#2f7de9" />
      </>
    ),
  },
  {
    name: "whatsapp",
    run: true,
    art: (
      <>
        <path d="M2 36l3-9a16.500 16.500 0 1 1 6 6.500z" fill="#1c1c1c" stroke="#2fd366" strokeWidth="3.200" />
        <path
          d="M12 11q3-3 5 2 0 2-2 3 2 5 7 7 2-3 4-2l3 2q0 5-5 5-12-3-13-13 0-3 1-4"
          fill="#2fd366"
        />
      </>
    ),
  },
  {
    name: "kicad",
    run: true,
    active: true,
    art: (
      <>
        <rect x="2" y="1" width="34" height="36" rx="5" fill="#2f46c4" />
        <text x="18" y="28" textAnchor="middle" fontFamily="Open Sans" fontWeight="800" fontSize="24" fill="#fff">
          Ki
        </text>
        <circle cx="27.500" cy="10.500" r="3" fill="#e8603a" />
      </>
    ),
  },
];

const TaskBar = () => (
  <Taskbar>
    <Weather>
      <svg width="36" height="36" viewBox="0 0 36 36">
        <defs>
          <linearGradient id="moon" x1="0" y1="0" x2="0" y2="1">
            <stop offset="0" stopColor="#f8cf4f" />
            <stop offset="1" stopColor="#ee7d22" />
          </linearGradient>
        </defs>
        <path d="M23 0a18 18 0 1 1-22 25Q22 27 23 0" fill="url(#moon)" />
      </svg>
      <Lines>
        <span>27°C</span>
        <Dim>Despejado</Dim>
      </Lines>
    </Weather>
    <StartLogo viewBox="0 0 36 36">
      <path d="M0 0h17.500v17.500H0zM18.500 0H36v17.500H18.500zM0 18.500h17.500V36H0zM18.500 18.500H36V36H18.500z" fill="#36b6f5" />
    </StartLogo>
    <SearchPill>
      <svg width="24" height="24" viewBox="0 0 24 24">
        <circle cx="10.500" cy="10" r="8" fill="#5a5a5a" stroke="#e6e6e6" strokeWidth="2.200" />
        <path d="M16 16l6 6.500" stroke="#e6e6e6" strokeWidth="2.800" />
      </svg>
      Buscar
    </SearchPill>
    <Apps>
      {apps.map((app) => (
        <AppSlot key={app.name} $active={app.active}>
          <svg width="38" height="38" viewBox="0 0 38 38">{app.art}</svg>
          {app.run && <RunDot $active={app.active} />}
        </AppSlot>
      ))}
    </Apps>
    <Tray>
      <svg width="18" height="12" viewBox="0 0 18 12">
        <path d="M1.500 10.500L9 3l7.500 7.500" fill="none" stroke="#fff" strokeWidth="2" />
      </svg>
      <Language>
        <span>ENG</span>
        <span>ES</span>
      </Language>
      <svg width="100" height="24" viewBox="0 0 100 24">
        <g fill="none" stroke="#fff" strokeWidth="1.800">
          <path d="M1 9q12-11 24 0M4.500 13q8.500-8 17 0M8.500 17q4.500-4 9 0" />
          <path d="M38 9h4l6-5v16l-6-5h-4zM52 8q3 4 0 8M56 5q5 7 0 14M60 3q6 9 0 18" />
          <rect x="76" y="5" width="20" height="14" rx="3" />
        </g>
        <circle cx="13" cy="20" r="2" fill="#fff" />
        <path d="M79 8h13v8H79zM97 9h3v6h-3z" fill="#fff" />
      </svg>
      <Clock>
        <span>8:07 a. m.</span>
        <span>03/16/2026</span>
      </Clock>
    </Tray>
  </Taskbar>
);

const App = () => (
  <>
    <GlobalStyle />
    <Window>
      <TitleBar>
        <svg width="25" height="25" viewBox="0 0 36 36"><Board /></svg>
        <span>*practica — Editor de placas</span>
        <WindowControls>
          <svg width="16" height="16"><path d="M0 8.500h16" stroke="#777" /></svg>
          <svg width="16" height="16">
            <path d="M1 4.500h10v10H1zM4 4V1.500h10.500V12H12" fill="none" stroke="#777" />
          </svg>
          <svg width="16" height="16"><path d="M1 1l14 14M15 1L1 15" stroke="#777" /></svg>
        </WindowControls>
      </TitleBar>
      <MenuBar>
        {menu.map((m) => <span key={m}>{m}</span>)}
      </MenuBar>
      <MainToolbar>
        <Tools items={mainTools} />
      </MainToolbar>
      <OptionBar>
        <Combo $w={327}>Pista: usar el ancho de clase de red</Combo>
        <TrackButton><Icon name="trackAuto" /></TrackButton>
        <BarLine $before={6} />
        <Combo $w={402}>Vía: utilizar los tamaños de las clases de red</Combo>
        <BarLine $before={7} />
        <Combo $w={199} $outlined>
          <LayerChip />
          Edge.Cuts
        </Combo>
        <LayerPair viewBox="0 0 38 38">
          <rect width="38" height="38" fill="#cc2f2f" />
          <path d="M30 0h8v38H11z" fill="#4a7fc4" />
          <path d="M28 0L11 38" stroke="#222" strokeWidth="4.500" />
          <path d="M28 0L11 38" stroke="#fff" strokeWidth="1.800" />
        </LayerPair>
        <BarLine $before={11} />
        <Combo $w={266} $pad={10}>0.5000 mm (19.69 mils)</Combo>
        <BarLine $before={7} />
        <Combo $w={148}>Zoom 13.00</Combo>
      </OptionBar>
      <Workspace>
        <SideTools><Tools items={leftTools} vertical /></SideTools>
        <BoardCanvas />
        <SideTools><Tools items={rightTools} vertical /></SideTools>
        <Sash />
        <SidePanel />
      </Workspace>
      <InfoBar>
        {info.map(([label, value, w]) => (
          <InfoCell key={label} $w={w}>
            <span>{label}</span>
            <span>{value}</span>
          </InfoCell>
        ))}
      </InfoBar>
      <StatusBar>
        {status.map(([text, w], i) => <StatusCell key={i} $w={w}>{text}</StatusCell>)}
      </StatusBar>
      <TaskBar />
      <PadDialog />
    </Window>
  </>
);

export default App;

// --- 스타일 컴포넌트 ---

const Window = styled.div`
  position: relative;
  display: flex;
  flex-direction: column;
  width: 2399px;
  height: 1342px;
  overflow: hidden;
`;

const TitleBar = styled.div`
  display: flex;
  align-items: center;
  gap: 7px;
  height: 36px;
  padding-left: 3px;
  background: #f3f3f3;
  color: #8a8a8a;

  span {
    padding-top: 2px;
  }
`;

const WindowControls = styled.div`
  display: flex;
  gap: 57px;
  margin-left: auto;
  padding-right: 31px;
`;

const MenuBar = styled.div`
  display: flex;
  align-items: center;
  gap: 22.2px;
  height: 29px;
  padding: 3px 0 0 11.5px;
  background: #fff;
  color: #747474;
`;

const MainToolbar = styled.div`
  display: flex;
  align-items: center;
  height: 60px;
  padding-left: 5.4px;
`;

const ToolSlot = styled.div`
  display: flex;
  align-items: center;
  justify-content: center;
  flex: none;
  width: ${(p) => (p.$vertical ? "56px" : "51.2px")};
  height: 51.2px;
`;

const ToolButton = styled.div`
  position: relative;
  display: flex;
  align-items: center;
  justify-content: center;
  width: 47px;
  height: 47px;
  border: 1.5px solid transparent;
  ${(p) =>
    p.$active &&
    css`
      border-color: #1d79bd;
      background: #b3d7f2;
    `}
`;

const MoreCorner = styled.i`
  position: absolute;
  right: 0;
  bottom: -4px;
  border-left: 11px solid transparent;
  border-bottom: 11px solid #000;
`;

const Separator = styled.div`
  flex: none;
  ${(p) =>
    p.$vertical
      ? css`
          height: 1.5px;
          width: 43px;
          margin: 5px 0 4.9px 6px;
        `
      : css`
          width: 1.5px;
          height: 42px;
          margin: 0 5px 0 4.9px;
        `}
  background: #8a8a8a;
`;

const OptionBar = styled.div`
  display: flex;
  align-items: center;
  height: 53px;
  padding: 0 0 2px 8px;
`;

const ComboBox = styled.div`
  display: flex;
  align-items: center;
  justify-content: space-between;
  flex: none;
  width: ${(p) => p.$w}px;
  height: ${(p) => (p.$outlined ? 32 : 35)}px;
  padding: 0 6px 0 ${(p) => p.$pad ?? 4}px;
  border: 1.5px solid #d2d2d2;
  border-bottom-color: #b8b8b8;
  border-radius: 2px;
  background: #fdfdfd;
  white-space: pre;

  span {
    display: flex;
    align-items: center;
  }
  ${(p) =>
    p.$outlined &&
    css`
      padding-left: 9px;
      border-color: #8a8a8a;
    `}
  ${(p) =>
    p.$disabled &&
    css`
      border-color: #e6e6e6;
      background: #f7f7f7;
      color: #8c8c8c;
    `}
`;

const ChevronSvg = styled.svg`
  width: 12px;
  height: 7px;
  opacity: 0.75;
`;

const TrackButton = styled.div`
  display: flex;
  align-items: center;
  justify-content: center;
  width: 47px;
  height: 48px;
  margin-left: 4px;
  border: 2px solid #1d79bd;
  background: #b3d7f2;
`;

const BarLine = styled.div`
  width: 1.5px;
  height: 42px;
  margin: 0 7.5px 0 ${(p) => p.$before}px;
  background: #8a8a8a;
`;

const LayerChip = styled.i`
  width: 17px;
  height: 17px;
  margin-right: 9px;
  border: 1.5px solid #111;
  background: #cfcfcb;
`;

const LayerPair = styled.svg`
  width: 38px;
  height: 38px;
  margin-left: 9px;
`;

const Workspace = styled.div`
  display: flex;
  height: 1011px;
`;

const SideTools = styled.div`
  display: flex;
  flex-direction: column;
  flex: none;
  width: 56px;
  padding-top: 5px;
`;

const Sash = styled.div`
  width: 6px;
  background: #dbdbdb;
`;

const Side = styled.div`
  display: flex;
  flex-direction: column;
  width: 408px;
`;

const PanelHeader = styled.div`
  display: flex;
  align-items: center;
  flex: none;
  height: 32.5px;
  padding: 0 0 1px 6px;
  background: #bababa;
`;

const SideTabs = styled.div`
  display: flex;
  align-items: flex-end;
  height: 40px;
  padding-left: 2px;
`;

const Tab = styled.div`
  display: flex;
  align-items: center;
  justify-content: center;
  width: ${(p) => p.$w}px;
  height: ${(p) => (p.$active ? 34 : 31)}px;
  padding-right: ${(p) => (p.$shift ? -p.$shift : 0)}px;
  border: 1px solid #e4e4e4;
  border-bottom: 0;
  background: ${(p) => (p.$active ? "#fafafa" : "#f2f2f2")};
  letter-spacing: ${(p) => p.$tracking ?? 0}px;
  white-space: nowrap;
`;

const LayerPanel = styled.div`
  width: 404px;
  height: 590px;
  margin-left: 2px;
  padding-top: 2px;
  border: 1px solid #e4e4e4;
  background: #f9f9f9;
`;

const LayerScroll = styled.div`
  display: flex;
  padding-left: 2px;
`;

const LayerList = styled.div`
  width: 374px;
  padding: 0.800px 0 0;
  background: #f0f0f0;
  font-size: 16px;
  letter-spacing: -0.1px;
`;

const LayerRow = styled.div`
  display: flex;
  align-items: center;
  height: 25px;
  background: ${(p) => (p.$active ? "#e2e2e2" : "none")};

  svg {
    margin: 0 6px 0 8px;
  }
`;

const Marker = styled.div`
  width: 24px;
  padding-left: 9px;
`;

const ActiveArrow = styled.i`
  display: block;
  width: 0;
  border: 6.5px solid transparent;
  border-left: 8px solid #3d4af5;
  border-right: 0;
`;

const Swatch = styled.i`
  width: 20px;
  height: 19px;
  background: ${(p) =>
    p.$alt
      ? `repeating-conic-gradient(${p.$color} 0 25%, ${p.$alt} 0 50%) 0 0 / 14px 14px`
      : p.$color};
`;

const ScrollTrack = styled.div`
  flex: 1;
  margin-right: 4px;
  border-left: 1px solid #fff;
  background: #f0f0f0;
`;

const ScrollThumb = styled.div`
  width: 7px;
  height: 447px;
  margin: 26px 0 0 9px;
  background: #858585;
`;

const LayerOptions = styled.div`
  display: flex;
  align-items: center;
  gap: 3px;
  width: 386px;
  height: 28px;
  margin: 4px 0 0 9px;
  padding: 0 0 2px 10px;
  background: #fff;
  color: #6e6e6e;
  font-size: 15.9px;
`;

const OptionArrow = styled.i`
  border: 5px solid transparent;
  border-left: 6px solid #666;
  border-right: 0;
`;

const Presets = styled.div`
  height: 149px;
  padding-left: 9px;
`;

const PresetLabel = styled.div`
  display: flex;
  align-items: flex-end;
  height: 30px;
  padding-bottom: 6px;
  font-size: 16px;

  &:first-child {
    height: 41px;
  }
`;

const SideSash = styled.div`
  flex: none;
  height: 6px;
  background: #dbdbdb;
`;

const FilterGrid = styled.div`
  display: grid;
  grid-template-columns: 193px auto;
  grid-auto-rows: 25px;
  padding: 6px 0 0 7px;
`;

const CheckLabel = styled.div`
  display: flex;
  align-items: center;
  gap: ${(p) => (p.$small ? 3.5 : 5.5)}px;
  letter-spacing: ${(p) => p.$tracking}px;
  white-space: nowrap;
  ${(p) => p.$small && "font-size: 16px;"}
`;

const CheckMark = styled.i`
  display: flex;
  align-items: center;
  justify-content: center;
  flex: none;
  width: 20px;
  height: 20px;
  border: 1.5px solid ${(p) => (p.$on ? "#0560b6" : "#666")};
  border-radius: 4px;
  background: ${(p) => (p.$on ? "#0560b6" : "#f5f5f5")};
`;

const InfoBar = styled.div`
  display: flex;
  height: 52px;
  padding: 1px 0 0 18px;
  border-top: 1px solid #cfcfcf;
  border-bottom: 1px solid #d4d4d4;
  color: #7a7a7a;
`;

const InfoCell = styled.div`
  display: flex;
  flex-direction: column;
  flex: none;
  width: ${(p) => p.$w}px;
  line-height: 24.5px;
  white-space: nowrap;
`;

const StatusBar = styled.div`
  display: flex;
  align-items: center;
  height: 34px;
`;

const StatusCell = styled.div`
  display: flex;
  align-items: center;
  flex: none;
  width: ${(p) => p.$w}px;
  height: 30px;
  padding: 3px 0 0 6px;
  white-space: pre;

  & + & {
    border-left: 1px solid #d4d4d4;
  }
`;

const Taskbar = styled.div`
  display: flex;
  align-items: center;
  height: 67px;
  border-top: 1px solid #3a3a3a;
  background: #1c1c1c;
  color: #fff;
`;

const Weather = styled.div`
  display: flex;
  align-items: center;
  gap: 12px;
  width: 662px;
  padding: 5px 0 0 32px;
`;

const Lines = styled.div`
  display: flex;
  flex-direction: column;
  font-size: 17.8px;
  line-height: 25px;
`;

const Dim = styled.span`
  color: #c9c9c9;
`;

const StartLogo = styled.svg`
  width: 37px;
  height: 36px;
  margin-top: 9px;
`;

const SearchPill = styled.div`
  display: flex;
  align-items: center;
  gap: 14px;
  width: 344px;
  height: 50px;
  margin: 8px 0 0 21px;
  padding-left: 18px;
  border: 1px solid #505050;
  border-radius: 25px;
  background: #3a3a3a;
  color: #cfcfcf;
  font-size: 19px;
`;

const Apps = styled.div`
  display: flex;
  align-items: flex-end;
  height: 100%;
  margin-left: 3px;
`;

const AppSlot = styled.div`
  position: relative;
  display: flex;
  align-items: center;
  justify-content: center;
  width: 59px;
  height: 61px;
  margin: 0 4.9px;
  padding-top: 4px;
  border-radius: 6px 6px 0 0;
  background: ${(p) => (p.$active ? "#2e2e2e" : "none")};
`;

const RunDot = styled.i`
  position: absolute;
  left: ${(p) => (p.$active ? 17 : 24)}px;
  bottom: 0;
  width: ${(p) => (p.$active ? 25 : 10)}px;
  height: 4px;
  border-radius: 3px 3px 0 0;
  background: ${(p) => (p.$active ? "#d89be0" : "#9a9a9a")};
`;

const Tray = styled.div`
  display: flex;
  align-items: center;
  margin: 6px 30px 0 auto;
`;

const Language = styled.div`
  display: flex;
  flex-direction: column;
  align-items: center;
  width: 36px;
  margin: 0 28px 0 33px;
  font-size: 17.5px;
  line-height: 25.5px;
`;

const Clock = styled(Language)`
  align-items: flex-end;
  width: 97px;
  margin: 0 0 0 24px;
  white-space: nowrap;
`;

// 대화상자는 메인 창 위에 떠 있음
const Dialog = styled.div`
  position: absolute;
  left: 459px;
  top: 170px;
  display: flex;
  flex-direction: column;
  width: 1481px;
  height: 808px;
  border: 1px solid #b4b4b4;
  border-radius: 12px;
  background: #f0f0f0;
  box-shadow: 0 10px 38px rgba(0, 0, 0, 0.36);
  overflow: hidden;
`;

const DialogTitle = styled.div`
  display: flex;
  align-items: center;
  justify-content: space-between;
  height: 46px;
  padding: 2px 18px 0 12px;
  background: #f3f3f3;
`;

const DialogBody = styled.div`
  display: flex;
  padding-left: 9px;
`;

const DialogTabs = styled.div`
  display: flex;
  align-items: flex-end;
  height: 52px;
`;

const DialogPanel = styled.div`
  display: flex;
  gap: 19px;
  width: 1106px;
  height: 649px;
  padding: 14px 0 0 10px;
  border: 1px solid #e4e4e4;
  background: #f9f9f9;
`;

const FormColumn = styled.div`
  width: 620px;
`;

const FormRow = styled.div`
  position: relative;
  display: flex;
  align-items: center;
  height: 35px;
  margin-top: ${(p) => p.$top ?? 0}px;
  padding-left: 6.5px;
`;

const FormLabel = styled.div`
  width: ${(p) => (p.$wide ? 158.5 : 142.5)}px;
  flex: none;
  letter-spacing: ${(p) => p.$tracking ?? 0}px;
  white-space: nowrap;
`;

const Field = styled.div`
  display: flex;
  align-items: center;
  flex: none;
  width: ${(p) => p.$w}px;
  height: 35px;
  padding-left: 8px;
  border: 1px solid #e6e6e6;
  border-bottom: ${(p) => (p.$focus ? "2.5px solid #0b62bd" : "1.5px solid #868686")};
  border-radius: 2px;
  background: #fff;
`;

const Unit = styled.div`
  display: flex;
  justify-content: space-between;
  flex: none;
  width: ${(p) => p.$w}px;
  padding: 0 8px 0 8px;
`;

const EditLayer = styled.div`
  width: 192px;
  padding-right: 8px;
  text-align: right;
`;

const Degree = styled.div`
  padding-left: 8px;
`;

// 빨간 강조 테두리
const Highlight = styled.div`
  position: absolute;
  left: -6px;
  top: -8px;
  width: 605px;
  height: 50px;
  border: 6px solid #fb0000;
`;

const Rule = styled.div`
  height: 1.5px;
  margin-top: ${(p) => p.$top}px;
  background: #9c9c9c;
`;

const LayerColumn = styled.div`
  width: 352px;
  padding-top: 10px;
`;

const LayerBox = styled.div`
  height: 445px;
  padding: 9px 0 0 11px;
  border: 1px solid #dadada;
`;

const Caption = styled.div`
  height: 25px;
  margin-top: ${(p) => p.$top ?? 0}px;
  font-size: 16px;
`;

const TechRow = styled.div`
  display: flex;
  align-items: center;
  height: 30px;
`;

const FabLabel = styled.div`
  display: flex;
  align-items: flex-end;
  height: 43px;
  padding-bottom: 7px;
  letter-spacing: 0.13px;
`;

const PreviewColumn = styled.div`
  display: flex;
  flex-direction: column;
  gap: 13px;
  padding: 41px 0 0 11px;
`;

const PreviewInfo = styled.div`
  width: 345px;
  height: 206px;
  border: 1.5px solid #666;
`;

const DialogFooter = styled.div`
  display: flex;
  align-items: center;
  justify-content: space-between;
  height: 58px;
  padding: 0 5px 0 15px;
`;

const FootNote = styled.div`
  font-size: 16px;
`;

const FooterRight = styled.div`
  display: flex;
  align-items: center;
`;

const ButtonRow = styled.div`
  display: flex;
  gap: 12px;
  margin: 8px 0 0 75px;
`;

const PushButton = styled.div`
  display: flex;
  align-items: center;
  justify-content: center;
  width: 114px;
  height: 33px;
  border: 1.5px solid ${(p) => (p.$primary ? "#1f6fb8" : "#d0d0d0")};
  border-radius: 5px;
  background: #fdfdfd;
`;

const Grip = styled.svg`
  position: absolute;
  right: 3px;
  bottom: 1px;
  width: 13px;
  height: 13px;
`;
